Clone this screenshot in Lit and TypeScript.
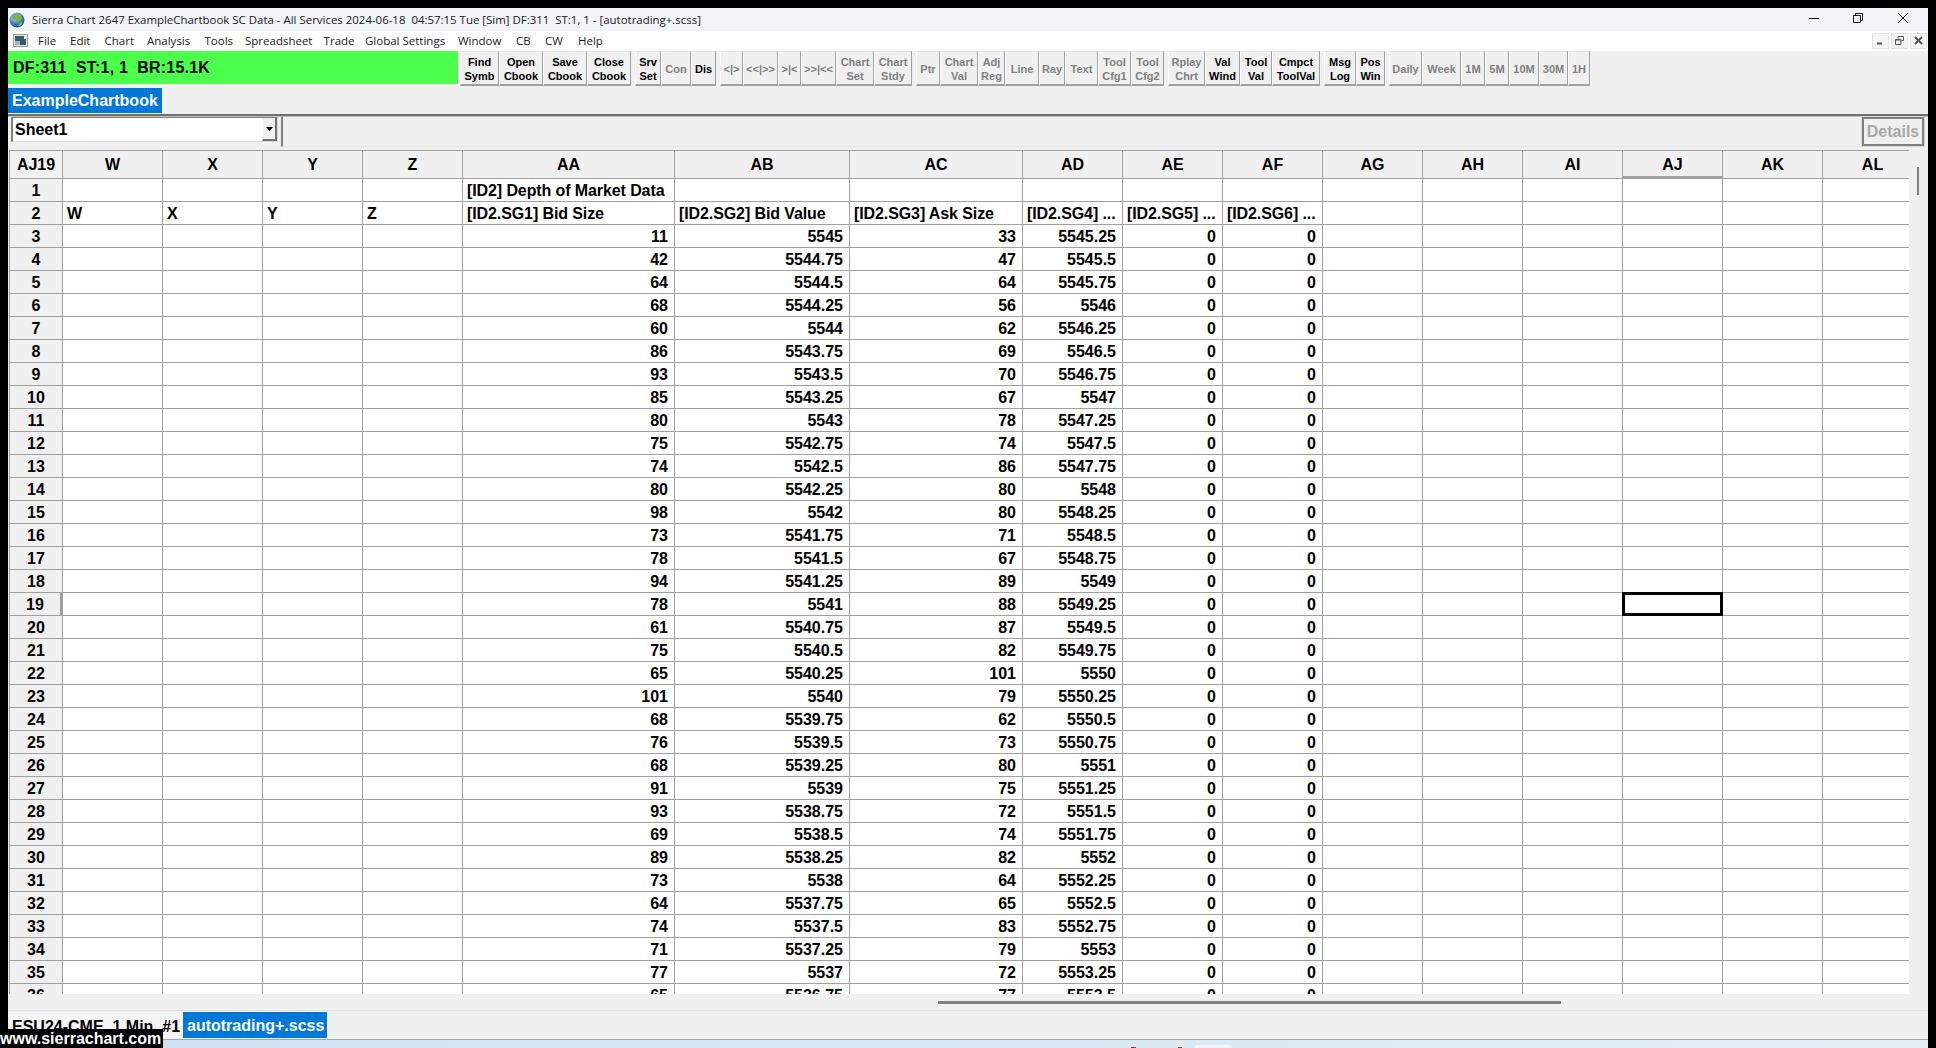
import { LitElement, html, css, svg } from "lit";
import { customElement } from "lit/decorators.js";

type Btn = [string[], number, boolean?];
const groups: Btn[][] = [
  [[["Find", "Symb"], 39, true], [["Open", "Cbook"], 44, true], [["Save", "Cbook"], 44, true], [["Close", "Cbook"], 44, true]],
  [[["Srv", "Set"], 26, true], [["Con"], 30], [["Dis"], 25, true]],
  [[["<|>"], 23], [["<<|>>"], 35], [[">|<"], 23], [[">>|<<"], 35], [["Chart", "Set"], 38], [["Chart", "Stdy"], 38]],
  [[["Ptr"], 24], [["Chart", "Val"], 38], [["Adj", "Reg"], 27], [["Line"], 34], [["Ray"], 26], [["Text"], 33], [["Tool", "Cfg1"], 33], [["Tool", "Cfg2"], 33]],
  [[["Rplay", "Chrt"], 37], [["Val", "Wind"], 35, true], [["Tool", "Val"], 32, true], [["Cmpct", "ToolVal"], 48, true]],
  [[["Msg", "Log"], 32, true], [["Pos", "Win"], 29, true]],
  [[["Daily"], 33], [["Week"], 39], [["1M"], 24], [["5M"], 24], [["10M"], 30], [["30M"], 29], [["1H"], 22]],
];

const menus = [
  ["File", 32], ["Edit", 34.5], ["Chart", 42.5], ["Analysis", 57.5], ["Tools", 40.5], ["Spreadsheet", 78.6],
  ["Trade", 41.4], ["Global Settings", 93], ["Window", 58], ["CB", 29], ["CW", 33], ["Help", 40],
] as [string, number][];

const columns: string[] = ["W", "X", "Y", "Z", "AA", "AB", "AC", "AD", "AE", "AF", "AG", "AH", "AI", "AJ", "AK", "AL"];
const widths: Record<string, number> = { AA: 212, AB: 175, AC: 173 };

const bid = [11,42,64,68,60,86,93,85,80,75,74,80,98,73,78,94,78,61,75,65,101,68,76,68,91,93,69,89,73,64,74,71,77,65];
const ask = [33,47,64,56,62,69,70,67,78,74,86,80,80,71,67,89,88,87,82,101,79,62,73,80,75,72,74,82,64,65,83,79,72,77];

const labels: Record<string, string> = {
  W: "W", X: "X", Y: "Y", Z: "Z", AA: "[ID2.SG1] Bid Size", AB: "[ID2.SG2] Bid Value", AC: "[ID2.SG3] Ask Size",
  AD: "[ID2.SG4] ...", AE: "[ID2.SG5] ...", AF: "[ID2.SG6] ...",
};

function value(col: string, i: number): string {
  if (col === "AA") return String(bid[i]);
  if (col === "AB") return String(5545 - 0.25 * i);
  if (col === "AC") return String(ask[i]);
  if (col === "AD") return String(5545.25 + 0.25 * i);
  if (col === "AE" || col === "AF") return "0";
  return "";
}

const globe = svg`<svg class="globe" viewBox="0 0 16 16" width="16" height="16">
  <defs><radialGradient id="g" cx="0.4" cy="0.3" r="0.8"><stop offset="0" stop-color="#bfe6ff"/><stop offset="0.55" stop-color="#3f86c8"/><stop offset="1" stop-color="#12406f"/></radialGradient></defs>
  <circle cx="8" cy="8" r="7.5" fill="url(#g)"/>
  <path d="M4 2.5C7 1 11 1.5 12.5 4 13.5 6 11 8.5 9.5 10 8 11 7.5 8.5 6 8 4 7.5 3 5 4 2.5Z" fill="#7fb23a"/>
  <path d="M10 11.5c1.5-.8 3-1.5 3.5-1-.5 2-2 3.5-3.5 4-.8-.8-.6-2.2 0-3Z" fill="#8cb84a"/>
</svg>`;

const docIcon = svg`<svg viewBox="0 0 16 14" width="16" height="14">
  <rect x="0.5" y="0.5" width="14" height="12" fill="#e8e8e8" stroke="#9a9a9a"/>
  <rect x="2" y="2" width="11" height="9" fill="#39596f"/>
  <rect x="2" y="7" width="5" height="4" fill="#9fb8c6"/>
  <rect x="11" y="2" width="2" height="3" fill="#fff"/>
</svg>`;

@customElement("app-root")
export class AppRoot extends LitElement {
  static styles = css`
    :host {
      display: block;
      position: relative;
      width: 1936px;
      height: 1048px;
      overflow: hidden;
      background: #000;
      font-family: "Liberation Sans", Arial, sans-serif;
    }
    .window {
      display: flex;
      flex-direction: column;
      height: 1040px;
      margin: 8px 8px 0;
      background: #f0f0f0;
    }
    .title {
      display: flex;
      align-items: center;
      flex: 0 0 23px;
      background: #f2f4f9;
      color: #1a1a1a;
      font: 11.45px "Open Sans", sans-serif;
      white-space: pre;
    }
    .globe { margin: 0 7px 0 1px; flex: none; }
    .title-text { flex: 1; }
    .caption { display: flex; flex: none; align-items: center; padding-bottom: 3px; }
    .caption svg { display: block; fill: none; stroke: #1a1a1a; stroke-width: 1; }
    .c-min { margin-right: 34px; }
    .c-max { margin-right: 35px; }
    .c-close { margin-right: 20px; }
    .menu {
      display: flex;
      align-items: center;
      flex: 0 0 20px;
      padding-bottom: 1px;
      box-sizing: border-box;
      background: #fff;
      color: #1a1a1a;
      font: 11.5px "Open Sans", sans-serif;
      padding-left: 5px;
    }
    .menu .doc { flex: none; width: 25px; display: flex; }
    .menu-item { flex: none; }
    .mdi { margin-left: auto; display: flex; gap: 2px; margin-right: 1px; }
    .mdi span {
      display: flex; align-items: center; justify-content: center;
      width: 17px; height: 16px; background: #f4f4f4; border: 1px solid #e2e2e2; box-sizing: border-box;
    }
    .toolbar { display: flex; flex: 0 0 37px; align-items: flex-start; }
    .status {
      flex: 0 0 450px;
      height: 33px;
      margin-right: 2px;
      padding-left: 5px;
      box-sizing: border-box;
      background: #4dff4d;
      color: #000;
      font-weight: 700;
      font-size: 16px;
      letter-spacing: 0.2px;
      line-height: 33px;
      white-space: pre;
    }
    .group { display: flex; margin-right: 4px; }
    .btn {
      box-sizing: border-box;
      height: 35px;
      padding-top: 1px;
      display: flex;
      flex-direction: column;
      align-items: center;
      justify-content: center;
      font-size: 11px;
      font-weight: 700;
      line-height: 14px;
      color: #808080;
      background: #f0f0f0;
      border-top: 1px solid #e4e4e4;
      border-left: 1px solid #fff;
      border-right: 1px solid #a0a0a0;
      border-bottom: 2px solid #a0a0a0;
      white-space: nowrap;
    }
    .btn.on { color: #000; }
    .book { flex: 0 0 26px; display: flex; }
    .book span {
      width: 154px;
      height: 25px;
      background: #0078d7;
      color: #fff;
      font-size: 16px;
      font-weight: 700;
      line-height: 25px;
      padding-left: 4px;
      box-sizing: border-box;
    }
    .rule { flex: 0 0 3px; border-top: 2px solid #707070; border-bottom: 1px solid #c0c0c0; box-sizing: border-box; }
    .formula { flex: 0 0 33px; display: flex; box-sizing: border-box; padding-left: 3px; }
    .combo {
      flex: 0 0 267px;
      height: 25px;
      box-sizing: border-box;
      display: flex;
      background: #fff;
      border-left: 2px solid #808080;
      border-top: 1px solid #808080;
      border-right: 1px solid #dcdcdc;
      border-bottom: 1px solid #dcdcdc;
      font-size: 16px;
      font-weight: 700;
      line-height: 23px;
    }
    .combo .name { flex: 1; padding-left: 2px; }
    .combo .arrow {
      flex: 0 0 15px;
      display: flex; align-items: center; justify-content: center;
      background: #f0f0f0;
      border-right: 2px solid #707070;
      border-bottom: 2px solid #707070;
      border-left: 1px solid #fff;
      box-sizing: border-box;
    }
    .edit {
      flex: 1;
      margin-left: 3px;
      height: 30px;
      box-sizing: border-box;
      border-left: 2px solid #808080;
      border-bottom: 1px solid #e4e4e4;
    }
    .details {
      flex: 0 0 62px;
      height: 29px;
      margin-right: 4px;
      box-sizing: border-box;
      border: 2px solid #808080;
      outline: 1px solid #d8d8d8;
      color: #a8a8a8;
      font-size: 16px;
      font-weight: 700;
      line-height: 25px;
      text-align: center;
    }
    .gridwrap { flex: 0 0 844px; margin-left: 1px; position: relative; }
    .gridclip { width: 1900px; height: 844px; overflow: hidden; background: #fff; }
    .grid {
      display: grid;
      grid-template-rows: 28px;
      grid-auto-rows: 23px;
      border-left: 1px solid #a0a0a0;
      border-top: 1px solid #a0a0a0;
      background: #fff;
      width: max-content;
      font-size: 16px;
      font-weight: 700;
      color: #000;
    }
    .cell {
      position: relative;
      box-sizing: border-box;
      border-right: 1px solid #a0a0a0;
      border-bottom: 1px solid #a0a0a0;
      line-height: 24px;
      padding: 0 4px;
      white-space: nowrap;
      overflow: hidden;
    }
    .cell.lbl { letter-spacing: -0.1px; }
    .cell.num { text-align: right; padding-right: 6px; }
    .cell.head { background: #f0f0f0; text-align: center; line-height: 27px; }
    .cell.row { background: #f0f0f0; text-align: center; }
    .cell.row.sel { border-right: 3px solid #a0a0a0; }
    .cell.head.sel { border-bottom: 3px solid #a0a0a0; }
    .cell.active { overflow: visible; }
    .cell.active::after {
      content: "";
      position: absolute;
      inset: -1px;
      border: 3px solid #000;
      z-index: 1;
    }
    .vthumb {
      position: absolute;
      left: 1908px;
      top: 17px;
      width: 2px;
      height: 28px;
      background: #808080;
    }
    .hbar { flex: 0 0 17px; display: flex; align-items: center; padding-left: 930px; border-bottom: 1px solid #e4e4e4; box-sizing: border-box; }
    .hbar i { display: block; width: 623px; height: 3px; background: #808080; margin-top: 1px; }
    .tabs { flex: 0 0 29px; display: flex; align-items: center; box-sizing: border-box; border-bottom: 1px solid #a8a8a8; }
    .tab { font-size: 16px; font-weight: 700; white-space: pre; }
    .tab.chart { padding: 0 4px; width: 175px; box-sizing: border-box; height: 26px; line-height: 29px; background: #f4f4f4; }
    .tab.sheet { background: #0078d7; color: #fff; height: 26px; line-height: 28px; padding: 0 4px; width: 144px; box-sizing: border-box; }
    .desk {
      flex: 1;
      display: flex;
      align-items: flex-end;
      background: linear-gradient(90deg, #cfe2f2, #dbe9f5 60%, #e4eef7);
    }
    .fleck { height: 1px; flex: none; }
    .f1 { width: 5px; background: #d02020; margin-left: 1123px; }
    .f2 { width: 4px; background: #555; margin-left: 42px; }
    .f3 { width: 37px; height: 3px; background: #f2f6fa; margin-left: 13px; border-radius: 3px 3px 0 0; }
    .site {
      position: absolute;
      left: 0;
      top: 1029px;
      width: 163px;
      height: 19px;
      background: #000;
      color: #fff;
      font-size: 16px;
      font-weight: 700;
      line-height: 19px;
      white-space: nowrap;
    }
  `;

  private cells() {
    const out: unknown[] = [html`<div class="cell head">AJ19</div>`];
    for (const c of columns) out.push(html`<div class="cell head ${c === "AJ" ? "sel" : ""}">${c}</div>`);
    for (let r = 1; r <= 36; r++) {
      out.push(html`<div class="cell row ${r === 19 ? "sel" : ""}">${r}</div>`);
      for (const c of columns) {
        let text = "";
        let cls = "";
        if (r === 1 && c === "AA") { text = "[ID2] Depth of Market Data"; cls = "lbl"; }
        else if (r === 2) { text = labels[c] ?? ""; cls = "lbl"; }
        else if (r > 2) { text = value(c, r - 3); cls = "num"; }
        if (r === 19 && c === "AJ") cls = "active";
        out.push(html`<div class="cell ${cls}">${text}</div>`);
      }
    }
    return out;
  }

  render() {
    const cols = `53px ${columns.map((c) => (widths[c] ?? 100) + "px").join(" ")}`;
    return html`
      <div class="window">
        <div class="title">
          ${globe}
          <div class="title-text">Sierra Chart 2647 ExampleChartbook SC Data - All Services 2024-06-18  04:57:15 Tue [Sim] DF:311  ST:1, 1 - [autotrading+.scss]</div>
          <div class="caption">
            <svg class="c-min" width="10" height="10" viewBox="0 0 10 10"><path d="M0 5.5H10"/></svg>
            <svg class="c-max" width="10" height="10" viewBox="0 0 10 10"><path d="M.5 2.5h7v7h-7zM2.5 2.5v-2h7v7h-2"/></svg>
            <svg class="c-close" width="10" height="10" viewBox="0 0 10 10"><path d="M0 0L10 10M10 0L0 10"/></svg>
          </div>
        </div>
        <div class="menu">
          <span class="doc">${docIcon}</span>
          ${menus.map(([m, w]) => html`<span class="menu-item" style="width:${w}px">${m}</span>`)}
          <div class="mdi">
            <span><svg width="9" height="9" viewBox="0 0 9 9"><path d="M1 7.5h5" stroke="#555" stroke-width="2"/></svg></span>
            <span><svg width="9" height="9" viewBox="0 0 9 9" fill="none" stroke="#555"><path d="M3 2.5V.5h5.5v4h-2M.5 3.5h5.5v5H.5zM.5 4h5.5"/></svg></span>
            <span><svg width="9" height="9" viewBox="0 0 9 9"><path d="M1 1L8 8M8 1L1 8" stroke="#555" stroke-width="2"/></svg></span>
          </div>
        </div>
        <div class="toolbar">
          <div class="status">DF:311  ST:1, 1  BR:15.1K</div>
          ${groups.map((g) => html`<div class="group">
            ${g.map(([lines, w, on]) => html`<div class="btn ${on ? "on" : ""}" style="width:${w}px">${lines.map((l) => html`<span>${l}</span>`)}</div>`)}
          </div>`)}
        </div>
        <div class="book"><span>ExampleChartbook</span></div>
        <div class="rule"></div>
        <div class="formula">
          <div class="combo">
            <div class="name">Sheet1</div>
            <div class="arrow"><svg width="7" height="4" viewBox="0 0 7 4"><path d="M0 0H7L3.5 4Z" fill="#000"/></svg></div>
          </div>
          <div class="edit"></div>
          <div class="details">Details</div>
        </div>
        <div class="gridwrap">
          <div class="gridclip"><div class="grid" style="grid-template-columns:${cols}">${this.cells()}</div></div>
          <div class="vthumb"></div>
        </div>
        <div class="hbar"><i></i></div>
        <div class="tabs">
          <div class="tab chart">ESU24-CME  1 Min  #1</div>
          <div class="tab sheet">autotrading+.scss</div>
        </div>
        <div class="desk"><span class="fleck f1"></span><span class="fleck f2"></span><span class="fleck f3"></span></div>
      </div>
      <div class="site">www.sierrachart.com</div>
    `;
  }
}
